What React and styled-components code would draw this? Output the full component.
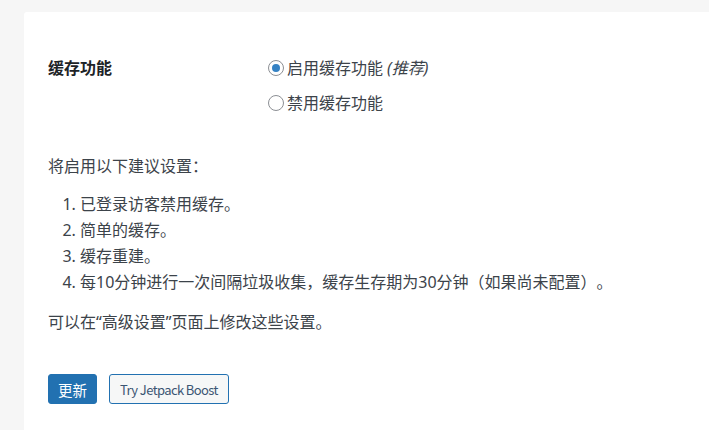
import React from 'react'
import styled, { createGlobalStyle } from 'styled-components'

const GlobalStyle = createGlobalStyle`
  html, body {
    margin: 0;
    padding: 0;
    background: #f6f6f6;
  }
  body {
    font-family: "Noto Sans", "Noto Sans CJK SC", sans-serif;
    color: #3c434a;
    text-spacing-trim: space-all;
  }
`

const Page = styled.div`
  padding: 12px 0 0 24px;
`

const Card = styled.div`
  background: #ffffff;
  border-radius: 3px 0 0 0;
  padding: 44px 24px 40px;
  font-size: 16px;
`

const FormTable = styled.div`
  display: grid;
  grid-template-columns: 220px 1fr;
  margin-bottom: 39px;
`

const Label = styled.div`
  font-weight: 700;
  color: #1d2327;
  line-height: 24px;
`

const Options = styled.div`
  display: flex;
  flex-direction: column;
  gap: 11px;
`

const Option = styled.label`
  display: flex;
  align-items: center;
  gap: 3px;
  line-height: 24px;
  cursor: pointer;

  em {
    font-style: italic;
    margin-left: 4px;
  }
`

const Radio = styled.input.attrs({ type: 'radio' })`
  appearance: none;
  margin: 0;
  width: 16px;
  height: 16px;
  border-radius: 50%;
  border: 1px solid #8c8f94;
  background: #fff;
  display: grid;
  place-items: center;
  box-sizing: border-box;

  &:checked::before {
    content: '';
    width: 8px;
    height: 8px;
    border-radius: 50%;
    background: #3582c4;
  }
`

const Para = styled.p`
  margin: 0 0 ${p => (p.$tight ? '11px' : '0')};
  line-height: 25.6px;
`

const List = styled.ol`
  margin: 0 0 15px;
  padding-left: 32px;
  line-height: 26px;
`

const Actions = styled.div`
  display: flex;
  gap: 12px;
  margin-top: 39px;
`

const Button = styled.button`
  height: 30px;
  border-radius: 3px;
  border: 1px solid #2271b1;
  padding: 0 ${p => (p.$primary ? '9px' : '10px')};
  font-family: "Noto Sans CJK SC", "Noto Sans", sans-serif;
  font-size: ${p => (p.$primary ? '14.5px' : '13px')};
  letter-spacing: ${p => (p.$primary ? '0' : '-0.6px')};
  background: ${p => (p.$primary ? '#2271b1' : '#f6f7f7')};
  color: ${p => (p.$primary ? '#ffffff' : '#3b5573')};
  cursor: pointer;
`

const items = [
  '已登录访客禁用缓存。',
  '简单的缓存。',
  '缓存重建。',
  '每10分钟进行一次间隔垃圾收集，缓存生存期为30分钟（如果尚未配置）。',
]

export default function App() {
  return (
    <>
      <GlobalStyle />
      <Page>
        <Card>
          <FormTable>
            <Label>缓存功能</Label>
            <Options>
              <Option>
                <Radio name="cache" defaultChecked />
                <span>启用缓存功能<em>(推荐)</em></span>
              </Option>
              <Option>
                <Radio name="cache" />
                <span>禁用缓存功能</span>
              </Option>
            </Options>
          </FormTable>

          <Para $tight>将启用以下建议设置：</Para>
          <List>
            {items.map(t => (
              <li key={t}>{t}</li>
            ))}
          </List>
          <Para>可以在“高级设置”页面上修改这些设置。</Para>

          <Actions>
            <Button $primary>更新</Button>
            <Button>Try Jetpack Boost</Button>
          </Actions>
        </Card>
      </Page>
    </>
  )
}
